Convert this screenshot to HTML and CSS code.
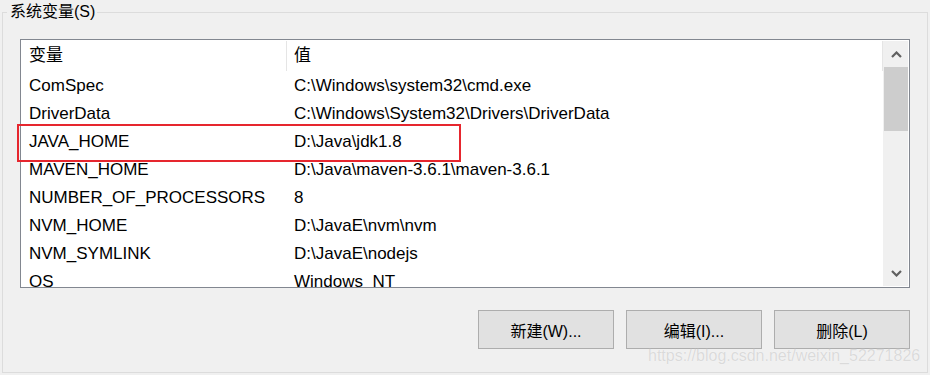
FILE: index.html
```html
<!DOCTYPE html>
<html lang="zh-CN">
<head>
    <meta charset="UTF-8">
    <title>系统变量</title>
    <link rel="stylesheet" href="styles.css">
</head>
<body>
    <fieldset class="group">
        <legend>系统变量(S)</legend>

        <div class="var-list">
            <div class="rows">
                <div class="row head">
                    <div class="cell name">变量</div>
                    <div class="cell value">值</div>
                </div>
                <div class="row"><div class="cell name">ComSpec</div><div class="cell value">C:\Windows\system32\cmd.exe</div></div>
                <div class="row"><div class="cell name">DriverData</div><div class="cell value">C:\Windows\System32\Drivers\DriverData</div></div>
                <div class="row"><div class="cell name">JAVA_HOME</div><div class="cell value">D:\Java\jdk1.8</div></div>
                <div class="row"><div class="cell name">MAVEN_HOME</div><div class="cell value">D:\Java\maven-3.6.1\maven-3.6.1</div></div>
                <div class="row"><div class="cell name">NUMBER_OF_PROCESSORS</div><div class="cell value">8</div></div>
                <div class="row"><div class="cell name">NVM_HOME</div><div class="cell value">D:\JavaE\nvm\nvm</div></div>
                <div class="row"><div class="cell name">NVM_SYMLINK</div><div class="cell value">D:\JavaE\nodejs</div></div>
                <div class="row"><div class="cell name">OS</div><div class="cell value">Windows_NT</div></div>
            </div>

            <div class="scrollbar">
                <div class="arrow">
                    <svg width="11" height="7" viewBox="0 0 11 7"><path d="M1 6 L5.5 1.5 L10 6" fill="none" stroke="#606060" stroke-width="2.2"/></svg>
                </div>
                <div class="track"><div class="thumb"></div></div>
                <div class="arrow">
                    <svg width="11" height="7" viewBox="0 0 11 7"><path d="M1 1 L5.5 5.5 L10 1" fill="none" stroke="#606060" stroke-width="2.2"/></svg>
                </div>
            </div>

            <!-- annotation box drawn over the JAVA_HOME row -->
            <div class="highlight"></div>
        </div>

        <div class="actions">
            <button class="btn">新建(W)...</button>
            <button class="btn">编辑(I)...</button>
            <button class="btn">删除(L)</button>
        </div>
    </fieldset>

    <div class="watermark">https://blog.csdn.net/weixin_52271826</div>
</body>
</html>
```

FILE: styles.css
```css
html, body {
    margin: 0;
    padding: 0;
}
body {
    width: 930px;
    height: 375px;
    background-color: #f0f0f0;
    font-family: "Liberation Sans", "Noto Sans CJK SC", sans-serif;
    color: #000;
    position: relative;
    overflow: hidden;
}
.group {
    margin: 0 2px;
    padding: 0 17px 23px 17px;
    border: 1px solid #dcdcdc;
    min-width: 0;
}
.group legend {
    margin-left: -13px;
    padding: 0 2px 0 3px;
    font-size: 16px;
    line-height: 24px;
    color: #000;
}
.var-list {
    position: relative;
    display: flex;
    height: 247px;
    margin-top: 15px;
    border: 1px solid #828790;
    background-color: white;
    font-size: 17px;
}
.rows {
    flex: 1;
    overflow: hidden;
}
.row {
    display: grid;
    grid-template-columns: 266px 1fr;
    height: 28px;
    line-height: 28px;
    white-space: nowrap;
}
.row.head {
    height: 32px;
    line-height: 32px;
}
.cell.name {
    padding-left: 8px;
}
.cell.value {
    padding-left: 7px;
}
.row.head .cell {
    background: linear-gradient(#e5e5e5, #e5e5e5) right 1px / 1px 30px no-repeat;
}
.scrollbar {
    width: 25px;
    margin: 1px 1px 1px 0;
    background-color: #f0f0f0;
    display: flex;
    flex-direction: column;
}
.arrow {
    height: 26px;
    display: flex;
    align-items: center;
    justify-content: center;
    padding-left: 1px;
}
.track {
    flex: 1;
    padding-left: 1px;
}
.thumb {
    height: 64px;
    background-color: #cdcdcd;
}
.highlight {
    position: absolute;
    left: -4px;
    top: 84px;
    width: 440px;
    height: 34px;
    border: 2px solid #e6262e;
}
.actions {
    display: flex;
    justify-content: flex-end;
    gap: 12px;
    margin-top: 22px;
}
.btn {
    width: 136px;
    height: 39px;
    background-color: #e1e1e1;
    border: 1px solid #adadad;
    border-radius: 0;
    font-family: "Liberation Sans", "Noto Sans CJK SC", sans-serif;
    font-size: 16px;
    color: #000;
    padding: 0;
}
.watermark {
    position: absolute;
    left: 648px;
    top: 347px;
    font-size: 16px;
    color: #dadada;
    text-shadow: 0 0 1px #fff;
    white-space: nowrap;
}
```
